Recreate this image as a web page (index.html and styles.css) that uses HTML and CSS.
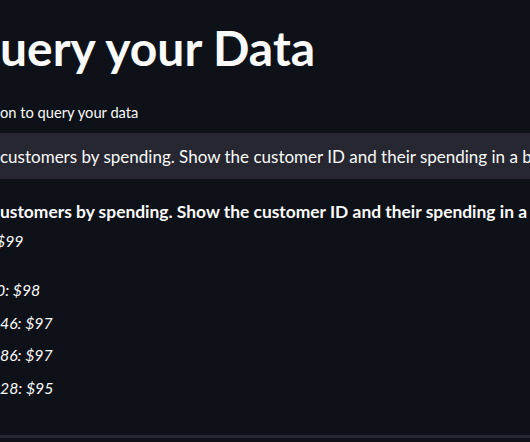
FILE: index.html
```html
<!DOCTYPE html>
<html lang="en">
<head>
    <meta charset="UTF-8">
    <title>Query your Data</title>
    <link rel="stylesheet" href="styles.css">
</head>
<body>

<div class="main">
    <h1 class="title">uery your Data</h1>
    <p class="subtitle">on to query your data</p>

    <div class="query-box">customers by spending. Show the customer ID and their spending in a bar chart</div>

    <div class="answer">
        <p class="question">ustomers by spending. Show the customer ID and their spending in a bar chart</p>
        <p class="row cut-dollar">$99</p>
    </div>

    <div class="results">
        <p class="row cut-digit">0: $98</p>
        <p class="row">46: $97</p>
        <p class="row">86: $97</p>
        <p class="row">28: $95</p>
    </div>
</div>

<div class="bottom"></div>

</body>
</html>
```

FILE: styles.css
```css
/* dark streamlit-ish theme */
html, body {
    height: 100%;
}
body {
    margin: 0;
    background-color: #0e1117;
    color: #fafafa;
    font-family: "Lato", "Noto Sans", sans-serif;
    overflow: hidden;
    display: flex;
    flex-direction: column;
}
.main {
    flex: 1;
    padding-top: 18px;
    white-space: nowrap;
    overflow: hidden;
}
p {
    margin: 0;
}
.title {
    margin: 0;
    font-size: 48px;
    line-height: 60px;
    font-weight: 700;
}
.subtitle {
    margin-top: 22px;
    font-size: 14.7px;
    line-height: 24px;
}
.query-box {
    margin-top: 9px;
    background-color: #262730;
    padding: 13px 0 11px;
    font-size: 17px;
    line-height: 22px;
}
.answer {
    margin-top: 18px;
    font-size: 17.4px;
    line-height: 29px;
}
.question {
    font-weight: 700;
}
.results {
    margin-top: 19px;
    font-size: 15.8px;
    line-height: 32.5px;
}
.row {
    font-style: italic;
    font-size: 15.8px;
}
.cut-dollar {
    text-indent: -4px;
}
.cut-digit {
    text-indent: -4px;
}
.bottom {
    height: 4px;
    border-top: 3px solid #262730;
}
```
